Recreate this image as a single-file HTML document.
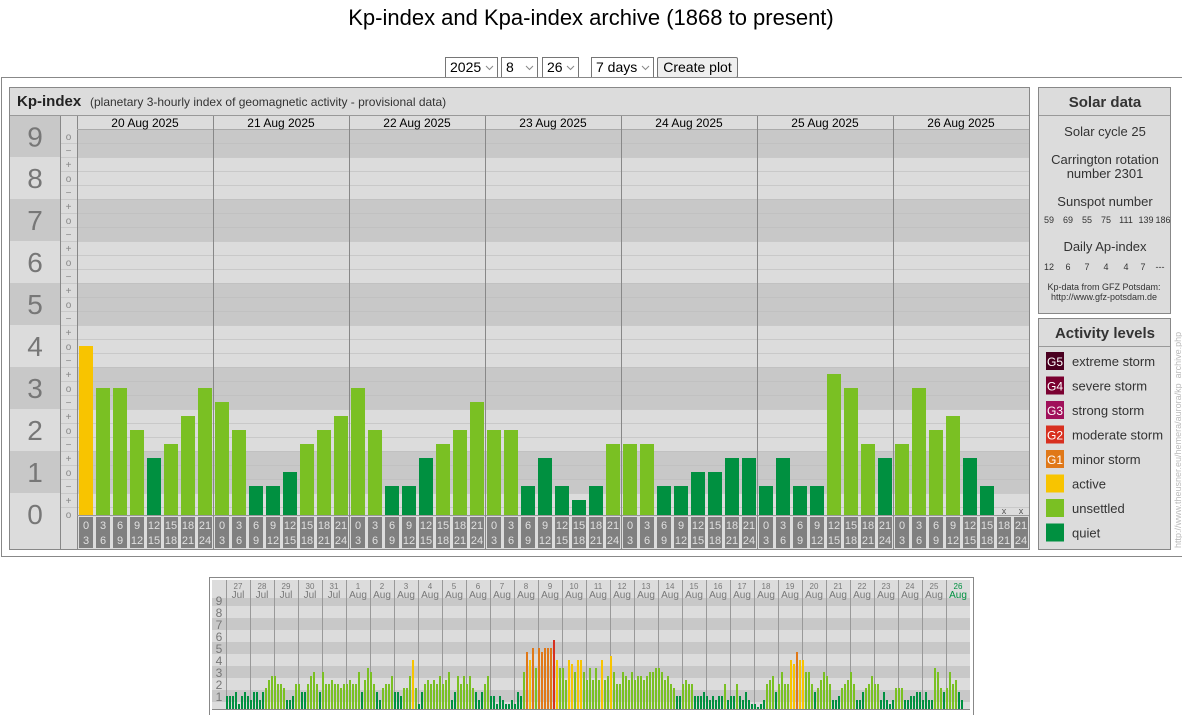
<!DOCTYPE html>
<html><head><meta charset="utf-8">
<style>
body{margin:0;width:1182px;height:715px;overflow:hidden;background:#fff;font-family:"Liberation Sans",Arial,sans-serif;position:relative}
.t{position:absolute;left:0;width:1182px;top:5px;text-align:center;font-size:22px;color:#000}
.sel{position:absolute;top:57px;height:19px;border:1px solid #767676;background:#fff;font-size:14px;line-height:19px;padding-left:4px;box-sizing:border-box;height:21px}
.sel svg{position:absolute;right:3px;top:7px}
.btn{position:absolute;top:57px;left:657px;width:81px;height:21px;border:1px solid #767676;background:#efefef;font-size:14px;line-height:19px;text-align:center;box-sizing:border-box;border-radius:2px}
svg.main{position:absolute;left:0;top:0}
</style></head><body>
<div class="t">Kp-index and Kpa-index archive (1868 to present)</div>
<div class="sel" style="left:445px;width:53px">2025<svg width="9" height="6"><path d="M1 1l3.5 3.5L8 1" stroke="#888" fill="none"/></svg></div>
<div class="sel" style="left:501px;width:37px">8<svg width="9" height="6"><path d="M1 1l3.5 3.5L8 1" stroke="#888" fill="none"/></svg></div>
<div class="sel" style="left:542px;width:37px">26<svg width="9" height="6"><path d="M1 1l3.5 3.5L8 1" stroke="#888" fill="none"/></svg></div>
<div class="sel" style="left:591px;width:63px">7 days<svg width="9" height="6"><path d="M1 1l3.5 3.5L8 1" stroke="#888" fill="none"/></svg></div>
<div class="btn">Create plot</div>
<svg class="main" id="s" width="1182" height="715" xmlns="http://www.w3.org/2000/svg" font-family="Liberation Sans, Arial, sans-serif"></svg>
<script>
var s=document.getElementById('s'),h='';
function r(x,y,w,hh,f,st){h+='<rect x="'+x+'" y="'+y+'" width="'+w+'" height="'+hh+'" fill="'+f+'"'+(st?' stroke="'+st+'"':'')+'/>';}
function l(x1,y1,x2,y2,c,o){h+='<line x1="'+x1+'" y1="'+y1+'" x2="'+x2+'" y2="'+y2+'" stroke="'+c+'"'+(o?' stroke-opacity="'+o+'"':'')+'/>';}
function t(x,y,sz,c,tx,a,w){h+='<text x="'+x+'" y="'+y+'" font-size="'+sz+'" fill="'+c+'" text-anchor="'+(a||'middle')+'"'+(w?' font-weight="bold"':'')+'>'+tx+'</text>';}
var D='#c8c8c8',L='#dcdcdc';
function col(v){return v<=4?'#009040':v<=10?'#7ac023':v<=13?'#f8c400':v<=16?'#e07818':v<=19?'#d83020':'#a0105a';}
// outer frame
h+='<rect x="1.5" y="77.5" width="1185" height="479" fill="#fff" stroke="#888"/>';
// main box
r(9.5,87.5,1020,462,'#dcdcdc','#888');
l(10,115.5,1029,115.5,'#999');
t(17,106,15,'#222','Kp-index','start',1);
t(90,106,12,'#333','(planetary 3-hourly index of geomagnetic activity - provisional data)','start');
// bands
for(var n=9;n>=0;n--){var y0,y1;if(n==9){y0=129;y1=157}else if(n==0){y0=493;y1=516}else{y0=129+14*(26-3*n);y1=y0+42}
 var c=(n%2)?D:L;r(77,y0,952,y1-y0,c);r(60,y0,17,y1-y0,L);
 var ly0=n==9?116:y0,ly1=n==0?549:y1;r(10,ly0,50,ly1-ly0,c);
 t(35,(ly0+(n==0?535:ly1))/2+10,28,'#777',n);}
r(60,116,17,13,L);r(77,116,952,13,L);
var sg=['o','−'];for(var i=0;i<8;i++)sg.push('+','o','−');sg.push('+','o');
for(var i=0;i<28;i++){var y=129+14*i;if(i>0){l(77,y+.5,1029,y+.5,'#bdbdbd',.6);l(60,y+.5,77,y+.5,'#bdbdbd',.6);}
 if(y+7<516)t(68.5,y+11,10,'#888',sg[i]);}
l(60.5,116,60.5,549,'#888');l(77.5,116,77.5,549,'#888');l(77,129.5,1029,129.5,'#aaa');
l(77,515.5,1029,515.5,'#999');
var days=['20','21','22','23','24','25','26'];
var kp=[[12,9,9,6,4,5,7,9],[8,6,2,2,3,5,6,7],[9,6,2,2,4,5,6,8],[6,6,2,4,2,1,2,5],[5,5,2,2,3,3,4,4],[2,4,2,2,10,9,5,4],[5,9,6,7,4,2,-1,-1]];
for(var d=0;d<7;d++){var dx=77+136*d;if(d>0)l(dx+.5,116,dx+.5,549,'#888');
 t(dx+68,127,12,'#000',days[d]+' Aug 2025');
 for(var k=0;k<8;k++){var x=dx+17*k+2,v=kp[d][k];
  if(v>=0){var yt=514-14*v;r(x,yt,14,515-yt,col(v));}else t(x+7,514,9,'#555','x');
  r(x,517,14,31,'#808080');t(x+7,529,11,'#e0e0e0',3*k);t(x+7,544,11,'#e0e0e0',3*k+3);}}
// solar data
r(1038.5,87.5,132,226,'#dcdcdc','#888');l(1039,115.5,1170,115.5,'#999');
t(1105,107,15,'#333','Solar data','middle',1);
t(1105,136,13,'#333','Solar cycle 25');t(1105,164,13,'#333','Carrington rotation');t(1105,178,13,'#333','number 2301');
t(1105,206,13,'#333','Sunspot number');
var ss=['59','69','55','75','111','139','186'],sx=[1049,1068,1087,1106,1126,1146,1163];
for(var i=0;i<7;i++)t(sx[i],223,9,'#333',ss[i]);
t(1105,251,13,'#333','Daily Ap-index');
var ap=['12','6','7','4','4','7','---'],ax=[1049,1068,1087,1106,1126,1143,1160];
for(var i=0;i<7;i++)t(ax[i],270,9,'#333',ap[i]);
t(1104,290,9,'#333','Kp-data from  GFZ Potsdam:');t(1104,300,9,'#333','http://www.gfz-potsdam.de');
// activity
r(1038.5,318.5,132,231,'#dcdcdc','#888');l(1039,346.5,1170,346.5,'#999');
t(1105,338,15,'#333','Activity levels','middle',1);
var it=[['G5','#4a0020','extreme storm'],['G4','#7a0030','severe storm'],['G3','#a0105a','strong storm'],['G2','#d83020','moderate storm'],['G1','#e07818','minor storm'],['','#f8c400','active'],['','#7ac023','unsettled'],['','#009040','quiet']];
for(var i=0;i<8;i++){var cy=361+24.5*i;r(1046,cy-9,18,18,it[i][1]);if(it[i][0])t(1055,cy+5,12,'#fff',it[i][0]);t(1072,cy+5,13,'#333',it[i][2],'start');}
h+='<text transform="translate(1181,548) rotate(-90)" font-size="9" fill="#bbb">http://www.theusner.eu/hemera/aurora/kp_archive.php</text>';
// mini chart
r(209.5,577.5,764,140,'#fff','#888');
r(212,580,758,129,L);
for(var n=9;n>=1;n--){var yy=709-12*n-7;if(n%2){var a=Math.max(yy,598);r(212,a,758,yy+12-a,D);}
 t(219,709-12*n+4,12,'#777',n);}
l(226.5,580,226.5,709,'#999');l(212,709.5,970,709.5,'#888');
var md=[[3,3,3,4,1,3,4,3],[2,4,4,2,4,5,7,8],[8,6,6,5,2,2,3,6],[6,4,4,6,8,9,6,4],[9,6,6,7,6,6,5,6],[6,7,6,6,9,4,7,10],[9,6,4,2,5,6,6,8],[4,4,3,5,5,8,12,5],[1,4,6,7,6,7,6,8],[6,7,9,2,4,8,6,8],[6,8,5,4,2,4,6,8],[3,3,1,3,2,1,1,2],[1,4,3,9,14,12,15,10],[15,14,15,15,15,17,12,10],[10,7,12,11,9,12,12,9],[7,10,7,10,7,12,7,8],[13,9,6,6,9,8,7,9],[7,8,8,7,8,9,9,10],[10,9,7,8,6,5,3,3],[6,7,6,6,3,3,3,4],[3,2,3,2,3,3,6,2],[3,3,6,3,2,4,2,1],[1,0,1,2,6,7,8,4],[6,9,6,6,12,11,14,12],[12,9,9,6,4,5,7,9],[8,6,2,2,3,5,6,7],[9,6,2,2,4,5,6,8],[6,6,2,4,2,1,2,5],[5,5,2,2,3,3,4,4],[2,4,2,2,10,9,5,4],[5,9,6,7,4,2,-1,-1]];
for(var d=0;d<31;d++){var dx=226+24*d;if(d>0)l(dx+.5,580,dx+.5,709,'#999');
 var dn=d<5?27+d:d-4,mo=d<5?'Jul':'Aug',cc=d==30?'#009040':'#777';
 t(dx+12,589,8,cc,dn);t(dx+12,598,10,cc,mo);
 for(var k=0;k<8;k++){var v=md[d][k];if(v<0)continue;var hh=Math.max(4*v,1)+1;r(dx+3*k,709-hh,2,hh,col(v));}}
s.innerHTML=h;
</script>
</body></html>
